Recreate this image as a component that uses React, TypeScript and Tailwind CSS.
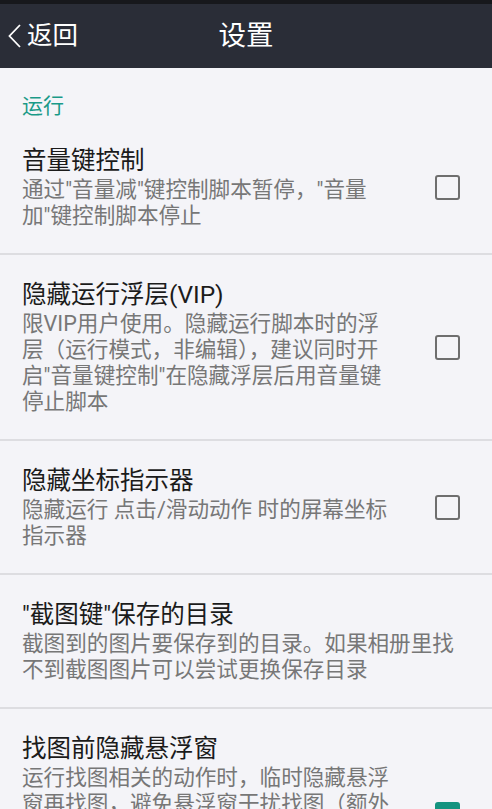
import React from 'react';

interface Pref {
  title: string;
  summary: string;
  checkbox?: boolean;
  checked?: boolean;
}

const prefs: Pref[] = [
  {
    title: '音量键控制',
    summary: '通过"音量减"键控制脚本暂停，"音量加"键控制脚本停止',
    checkbox: true,
  },
  {
    title: '隐藏运行浮层(VIP)',
    summary:
      '限VIP用户使用。隐藏运行脚本时的浮层（运行模式，非编辑），建议同时开启"音量键控制"在隐藏浮层后用音量键停止脚本',
    checkbox: true,
  },
  {
    title: '隐藏坐标指示器',
    summary: '隐藏运行 点击/滑动动作 时的屏幕坐标指示器',
    checkbox: true,
  },
  {
    title: '"截图键"保存的目录',
    summary: '截图到的图片要保存到的目录。如果相册里找不到截图图片可以尝试更换保存目录',
  },
  {
    title: '找图前隐藏悬浮窗',
    summary:
      '运行找图相关的动作时，临时隐藏悬浮窗再找图，避免悬浮窗干扰找图（额外耗时约300毫秒）。如果确定悬浮窗不会遮挡找图区域，可以关闭此选项以提高找图的速度',
    checkbox: true,
    checked: true,
  },
];

function CheckBox({ checked }: { checked?: boolean }) {
  if (checked) {
    return (
      <div className="w-[25px] h-[25px] rounded-[3px] bg-[#14937f] flex items-center justify-center">
        <svg width="19" height="19" viewBox="0 0 24 24" fill="none" stroke="white" strokeWidth="3">
          <path d="M4 12.5l5 5L20 6.5" />
        </svg>
      </div>
    );
  }
  return <div className="w-[25px] h-[25px] rounded-[3px] border-[2.5px] border-[#6e6e6e]" />;
}

function PrefRow({ pref }: { pref: Pref }) {
  return (
    <div className="flex items-center pl-[22px] pt-[25px] pb-[24px]">
      <div className={pref.checkbox ? 'w-[370px]' : 'flex-1 pr-[20px]'}>
        <div className="text-[24.5px] leading-[30px] text-[#1b1b1b]">{pref.title}</div>
        <div className="mt-[1px] text-[21.6px] leading-[26px] text-[#777777]">{pref.summary}</div>
      </div>
      {pref.checkbox && (
        <div className="ml-[43px]">
          <CheckBox checked={pref.checked} />
        </div>
      )}
    </div>
  );
}

export default function App() {
  return (
    <div
      className="min-h-screen bg-[#f4f4f8]"
      style={{ fontFamily: 'Roboto, "Noto Sans CJK SC", sans-serif' }}
    >
      <div className="h-[4px] bg-[#17181c]" />
      <div className="relative h-[64px] bg-[#2a2d37] flex items-center text-white">
        <div className="flex items-center pl-[8px]">
          <svg width="14" height="24" viewBox="0 0 14 24" fill="none" stroke="white" strokeWidth="1.8">
            <path d="M12 1L1.5 12L12 23" />
          </svg>
          <span className="ml-[5px] text-[25.5px] leading-none">返回</span>
        </div>
        <div className="absolute inset-0 flex items-center justify-center pointer-events-none">
          <span className="text-[27.5px] leading-none">设置</span>
        </div>
      </div>

      <div className="pl-[22px] pt-[25px] pb-[2px] text-[21px] leading-[26px] text-[#1a9a88]">运行</div>

      {prefs.map((p, i) => (
        <div key={i}>
          <PrefRow pref={p} />
          {i < prefs.length - 1 && <div className="h-[2px] bg-[#dddde1]" />}
        </div>
      ))}
    </div>
  );
}
